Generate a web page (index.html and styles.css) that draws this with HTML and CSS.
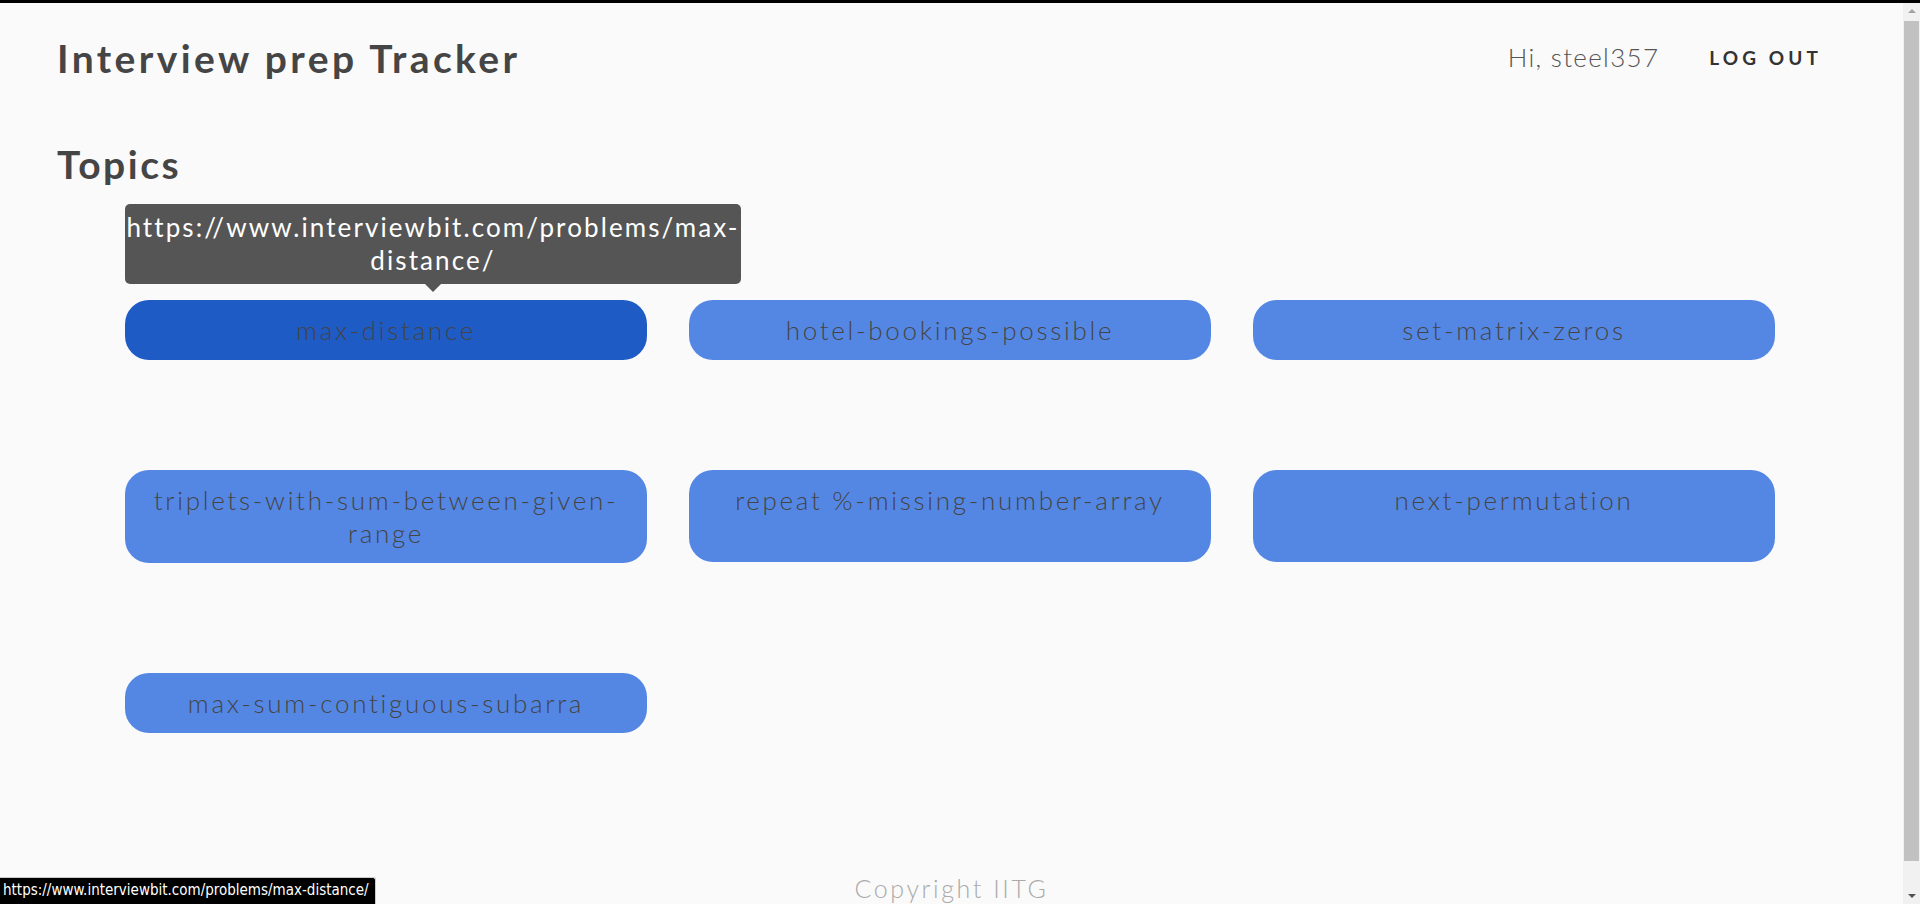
FILE: index.html
```html
<!DOCTYPE html>
<html lang="en">
<head>
<meta charset="utf-8">
<title>Interview prep Tracker</title>
<link rel="stylesheet" href="styles.css">
</head>
<body>
<div class="topline"></div>
<div class="page">
  <header class="header">
    <h1 class="brand">Interview prep Tracker</h1>
    <nav class="nav">
      <span class="greet">Hi, steel357</span>
      <a class="logout" href="#">LOG OUT</a>
    </nav>
  </header>
  <h2 class="section-title">Topics</h2>
  <main class="grid">
    <div class="cell">
      <div class="tooltip">https://www.interviewbit.com/problems/max-distance/</div>
      <a class="topic active" href="#">max-distance</a>
    </div>
    <div class="cell"><a class="topic" href="#">hotel-bookings-possible</a></div>
    <div class="cell"><a class="topic" href="#">set-matrix-zeros</a></div>
    <div class="cell"><a class="topic" href="#">triplets-with-sum-between-given-range</a></div>
    <div class="cell"><a class="topic" href="#">repeat %-missing-number-array</a></div>
    <div class="cell"><a class="topic" href="#">next-permutation</a></div>
    <div class="cell"><a class="topic" href="#">max-sum-contiguous-subarra</a></div>
  </main>
  <footer class="footer">Copyright IITG</footer>
</div>
<div class="statusbar">https://www.interviewbit.com/problems/max-distance/</div>
<div class="scrollbar">
  <div class="sb-up"></div>
  <div class="sb-thumb"></div>
  <div class="sb-down"></div>
</div>
</body>
</html>
```

FILE: styles.css
```css
html, body {
  margin: 0;
  padding: 0;
  height: 100%;
  overflow: hidden;
}
body {
  background: #fafafa;
  font-family: Lato, "Noto Sans", sans-serif;
  color: #444;
}
.topline {
  position: fixed;
  top: 0;
  left: 0;
  right: 0;
  height: 3px;
  background: #000;
  z-index: 10;
}
.page {
  width: 1903px;
  padding-top: 35px;
}
.header {
  display: flex;
  justify-content: space-between;
  align-items: center;
  padding: 0 81px 0 57px;
  height: 46px;
}
.brand {
  margin: 0;
  font-size: 39px;
  font-weight: 700;
  letter-spacing: 3.4px;
  color: #454545;
  line-height: 46px;
}
.nav {
  display: flex;
  align-items: center;
  gap: 50px;
  margin-top: -2px;
}
.greet {
  font-size: 26px;
  font-weight: 300;
  color: #555;
  letter-spacing: 1.3px;
}
.logout {
  font-size: 19px;
  font-weight: 700;
  letter-spacing: 4.1px;
  color: #333;
  text-decoration: none;
}
.section-title {
  margin: 60px 0 0 57px;
  font-size: 39px;
  font-weight: 700;
  letter-spacing: 2.5px;
  color: #454545;
  line-height: 46px;
}
.grid {
  width: 1650px;
  margin: 113px 0 0 125px;
  display: grid;
  grid-template-columns: repeat(3, 522px);
  column-gap: 42px;
  row-gap: 110px;
  align-items: start;
}
.cell {
  position: relative;
}
.topic {
  display: block;
  box-sizing: border-box;
  padding: 14px 20px 13px;
  border-radius: 24px;
  background: #5487e4;
  color: #444;
  text-align: center;
  text-decoration: none;
  font-size: 26px;
  font-weight: 300;
  letter-spacing: 2.7px;
  line-height: 33px;
}
.cell:nth-child(n+4):nth-child(-n+6) .topic {
  min-height: 92px;
}
.topic.active {
  background: #1e5bc5;
}
.tooltip {
  position: absolute;
  left: 0;
  bottom: 100%;
  margin-bottom: 16px;
  width: 616px;
  box-sizing: border-box;
  padding: 7px 0;
  background: #555;
  color: #fff;
  border-radius: 5px;
  text-align: center;
  font-size: 26px;
  line-height: 33px;
  letter-spacing: 2.1px;
  font-weight: 400;
}
.tooltip::after {
  content: "";
  position: absolute;
  top: 100%;
  left: 50%;
  margin-left: -8px;
  border: 8px solid transparent;
  border-top-color: #555;
}
.footer {
  margin-top: 140px;
  text-align: center;
  font-size: 25px;
  font-weight: 300;
  color: #aaa;
  line-height: 30px;
  letter-spacing: 2.6px;
}
.statusbar {
  position: fixed;
  left: 0;
  bottom: 0;
  width: 376px;
  height: 27px;
  box-sizing: border-box;
  padding: 3px 0 0 3px;
  background: #000;
  color: #fff;
  border-top: 1px solid #ccc;
  border-right: 1px solid #ccc;
  border-top-right-radius: 3px;
  font-family: "DejaVu Sans Condensed", "Liberation Sans Narrow", "Liberation Sans", sans-serif;
  font-size: 15px;
  line-height: 19px;
  white-space: nowrap;
  overflow: hidden;
}
.scrollbar {
  position: fixed;
  top: 3px;
  right: 0;
  bottom: 0;
  width: 17px;
  background: #f1f1f1;
  display: flex;
  flex-direction: column;
  align-items: center;
}
.sb-up {
  margin-top: 6px;
  width: 0;
  height: 0;
  border-left: 4px solid transparent;
  border-right: 4px solid transparent;
  border-bottom: 4px solid #a3a3a3;
}
.sb-thumb {
  margin-top: 8px;
  width: 15px;
  height: 840px;
  background: #c1c1c1;
}
.sb-down {
  margin-top: auto;
  margin-bottom: 6px;
  width: 0;
  height: 0;
  border-left: 4px solid transparent;
  border-right: 4px solid transparent;
  border-top: 4px solid #505050;
}
```
